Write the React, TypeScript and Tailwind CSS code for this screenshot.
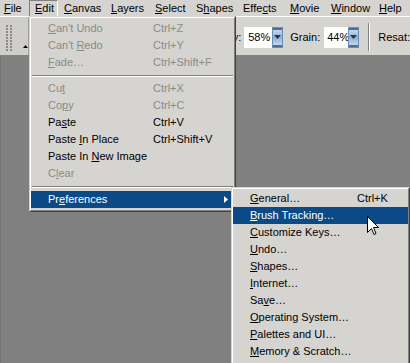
import React from 'react'

interface Item {
  label?: string
  u?: number
  sc?: string
  disabled?: boolean
  active?: boolean
  sub?: boolean
  sep?: boolean
}

const menus = [
  { label: 'File', u: 0, w: 29, pl: 4 },
  { label: 'Edit', u: 0, w: 29, pl: 6, open: true },
  { label: 'Canvas', u: 0, w: 47, pl: 6 },
  { label: 'Layers', u: 0, w: 44, pl: 6 },
  { label: 'Select', u: 0, w: 41, pl: 6 },
  { label: 'Shapes', u: 1, w: 47, pl: 6 },
  { label: 'Effects', u: 4, w: 47, pl: 6 },
  { label: 'Movie', u: 0, w: 41, pl: 6 },
  { label: 'Window', u: 0, w: 48, pl: 6 },
  { label: 'Help', u: 0, w: 37, pl: 6 },
]

const editItems: Item[] = [
  { label: "Can't Undo", u: 0, sc: 'Ctrl+Z', disabled: true },
  { label: "Can't Redo", u: 6, sc: 'Ctrl+Y', disabled: true },
  { label: 'Fade…', u: 0, sc: 'Ctrl+Shift+F', disabled: true },
  { sep: true },
  { label: 'Cut', u: 2, sc: 'Ctrl+X', disabled: true },
  { label: 'Copy', u: 2, sc: 'Ctrl+C', disabled: true },
  { label: 'Paste', u: 2, sc: 'Ctrl+V' },
  { label: 'Paste In Place', u: 6, sc: 'Ctrl+Shift+V' },
  { label: 'Paste In New Image', u: 9 },
  { label: 'Clear', u: 1, disabled: true },
  { sep: true },
  { label: 'Preferences', u: 2, active: true, sub: true },
]

const prefItems: Item[] = [
  { label: 'General…', u: 0, sc: 'Ctrl+K' },
  { label: 'Brush Tracking…', u: 0, active: true },
  { label: 'Customize Keys…', u: 0 },
  { label: 'Undo…', u: 0 },
  { label: 'Shapes…', u: 0 },
  { label: 'Internet…', u: 0 },
  { label: 'Save…', u: 2 },
  { label: 'Operating System…', u: 0 },
  { label: 'Palettes and UI…', u: 0 },
  { label: 'Memory & Scratch…', u: 0 },
]

function Access({ text, u }: { text: string; u: number }) {
  return (
    <span>
      {text.slice(0, u)}
      <span className="underline underline-offset-1">{text[u]}</span>
      {text.slice(u + 1)}
    </span>
  )
}

function MenuRows({ items, labelW }: { items: Item[]; labelW: number }) {
  return (
    <>
      {items.map((it, i) =>
        it.sep ? (
          <div key={i} className="h-[9px] flex items-center px-[1px]">
            <div className="w-full h-[2px] border-t border-[#808080] border-b border-b-white" />
          </div>
        ) : (
          <div
            key={i}
            className={`h-[17px] flex items-center relative ${
              it.active ? 'bg-[#0c4a87] text-white' : it.disabled ? 'text-[#8a8a8a]' : 'text-black'
            }`}
          >
            <div className="pl-[17px] shrink-0" style={{ width: labelW }}>
              <Access text={it.label!} u={it.u!} />
            </div>
            {it.sc && <div>{it.sc}</div>}
            {it.sub && (
              <svg className="absolute right-[6px] top-[5px]" width="4" height="7" viewBox="0 0 4 7">
                <path d="M0 0 L4 3.5 L0 7 Z" fill="white" />
              </svg>
            )}
          </div>
        )
      )}
    </>
  )
}

function Spinner() {
  return (
    <div className="w-[11px] h-[21px] flex flex-col border border-[#6d8cb4] bg-gradient-to-b from-[#d2e4f6] via-[#8fb0d6] to-[#d2e4f6]">
      <div className="h-[2px] bg-[#4a6d99]" />
      <div className="flex-1 flex items-center justify-center">
        <svg width="7" height="4" viewBox="0 0 7 4">
          <path d="M0 0 L7 0 L3.5 4 Z" fill="#333" />
        </svg>
      </div>
      <div className="h-[2px] bg-[#4a6d99]" />
    </div>
  )
}

export default function App() {
  return (
    <div className="relative w-[410px] h-[363px] overflow-hidden flex flex-col bg-[#808080] font-['Liberation_Sans',Arial,sans-serif] text-[11px] leading-none select-none">
      {/* menu bar */}
      <div className="h-[16px] bg-[#d5d4d1] flex shrink-0">
        {menus.map(m => (
          <div
            key={m.label}
            className={`h-[16px] flex items-center shrink-0 ${
              m.open ? 'border-l border-t border-[#808080] border-r-white border-r' : ''
            }`}
            style={{ width: m.w, paddingLeft: m.open ? m.pl - 1 : m.pl }}
          >
            <Access text={m.label} u={m.u} />
          </div>
        ))}
      </div>

      {/* toolbar */}
      <div className="h-[40px] shrink-0 bg-[#d5d4d1] border-t border-white border-b border-b-[#808080] flex items-end">
        <div className="w-[29px] h-full flex items-center pl-[6px] pt-[4px] bg-[#cfcecb] border-r border-[#a09f9c]">
          <div className="grid grid-cols-2 gap-[1px] w-[7px]">
            {Array.from({ length: 18 }).map((_, i) => (
              <div key={i} className="w-[2px] h-[2px] bg-[#8a8a8a]" />
            ))}
          </div>
          <svg className="ml-[10px] mt-[16px]" width="5" height="3" viewBox="0 0 5 3">
            <path d="M0 3 L2.5 0 L5 3 Z" fill="#000" />
          </svg>
        </div>
        <div className="w-[210px] h-full" />
        <div className="flex items-center gap-[4px] pb-[4px]">
          <span className="mr-[-1px]">y:</span>
          <div className="flex items-center">
            <div className="w-[28px] h-[21px] bg-white flex items-center pl-[4px]">58%</div>
            <Spinner />
          </div>
          <span className="ml-[3px]">Grain:</span>
          <div className="flex items-center">
            <div className="w-[24px] h-[21px] bg-white flex items-center pl-[3px]">44%</div>
            <Spinner />
          </div>
          <div className="ml-[5px] w-[2px] h-[28px] border-l border-[#808080] border-r border-r-white" />
          <span className="ml-[4px]">Resat:</span>
        </div>
      </div>

      {/* workspace */}
      <div className="flex-1 bg-[#808080] border-l border-[#747474]" />

      {/* Edit menu */}
      <div className="absolute left-[29px] top-[16px] w-[207px] bg-[#d5d4d1] border border-t-[#d5d4d1] border-l-[#d5d4d1] border-r-[#404040] border-b-[#404040]">
        <div className="border border-t-white border-l-white border-r-[#808080] border-b-[#808080] py-[2px]">
          <MenuRows items={editItems} labelW={122} />
        </div>
      </div>

      {/* Preferences submenu */}
      <div className="absolute left-[231px] top-[187px] w-[179px] h-[178px] bg-[#d5d4d1] border border-t-[#d5d4d1] border-l-[#d5d4d1] border-r-[#404040] border-b-[#404040]">
        <div className="h-full border border-t-white border-l-white border-r-[#808080] border-b-[#808080] pt-[1px]">
          <MenuRows items={prefItems} labelW={124} />
        </div>
      </div>

      {/* mouse pointer */}
      <svg className="absolute left-[367px] top-[216px]" width="12" height="20" viewBox="0 0 12 20">
        <path
          d="M0.5 0.5 L0.5 16.5 L4.5 12.5 L7 18.5 L9 17.5 L6.5 11.5 L11.5 11.5 Z"
          fill="white"
          stroke="black"
          strokeWidth="1"
          strokeLinejoin="miter"
        />
      </svg>
    </div>
  )
}
